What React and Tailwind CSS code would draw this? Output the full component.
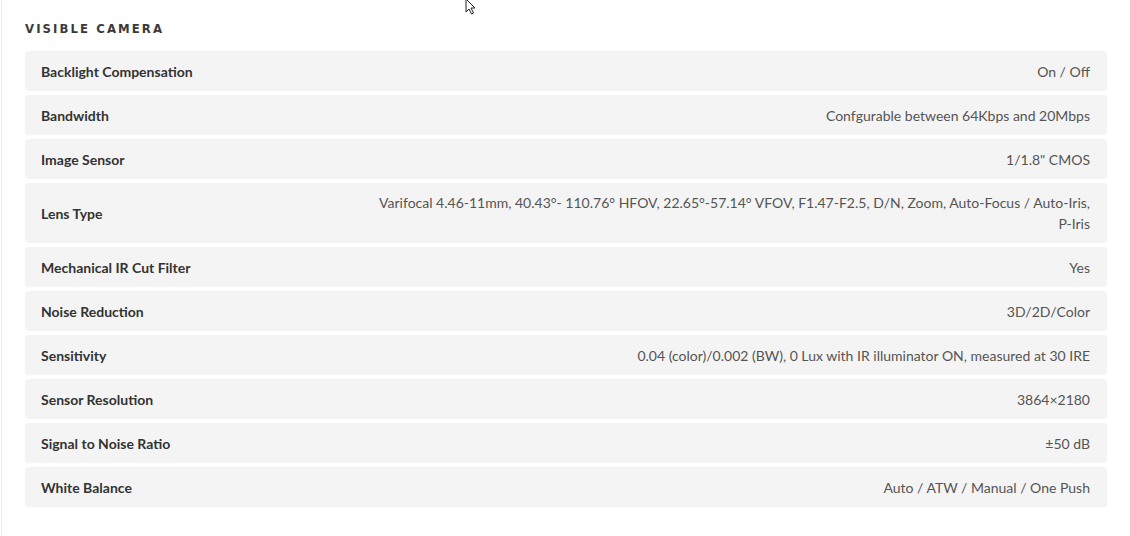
import React from 'react';

const SPECS = [
  ['Backlight Compensation', 'On / Off'],
  ['Bandwidth', 'Confgurable between 64Kbps and 20Mbps'],
  ['Image Sensor', '1/1.8" CMOS'],
  ['Lens Type', 'Varifocal 4.46-11mm, 40.43°- 110.76° HFOV, 22.65°-57.14° VFOV, F1.47-F2.5, D/N, Zoom, Auto-Focus / Auto-Iris, P\u2011Iris'],
  ['Mechanical IR Cut Filter', 'Yes'],
  ['Noise Reduction', '3D/2D/Color'],
  ['Sensitivity', '0.04 (color)/0.002 (BW), 0 Lux with IR illuminator ON, measured at 30 IRE'],
  ['Sensor Resolution', '3864×2180'],
  ['Signal to Noise Ratio', '±50 dB'],
  ['White Balance', 'Auto / ATW / Manual / One Push'],
];

function Cursor() {
  return (
    <svg className="absolute left-[465px] top-[-2px]" width="14" height="18" viewBox="0 0 14 18">
      <path d="M1 1 L1 14 L4 11 L6.5 16 L8.5 15 L6 10 L10 10 Z" fill="#fff" stroke="#222" strokeWidth="1" strokeLinejoin="round" />
    </svg>
  );
}

export default function App() {
  return (
    <div className="relative w-[1130px] h-[536px] bg-white overflow-hidden">
      <Cursor />
      <div className="ml-[1px] border-l border-[#ececec] h-full pl-[23px] pt-[21px] pr-[23px]">
        <h3
          className="text-[13px] font-bold uppercase tracking-[0.16em] text-[#3a3a3a] leading-[16px] mb-[14px]"
          style={{ fontFamily: '"DejaVu Sans Condensed", "DejaVu Sans", sans-serif' }}
        >
          Visible Camera
        </h3>
        <div className="flex flex-col gap-[4px]" style={{ fontFamily: 'Lato, "Open Sans", sans-serif' }}>
          {SPECS.map(([label, value]) => (
            <div
              key={label}
              className="flex items-center justify-between gap-8 bg-[#f4f4f4] rounded-[3px] min-h-[40px] pl-4 pr-[17px] py-[9px] text-[14px] leading-[21px]"
            >
              <span className="font-bold text-[#333] shrink-0">{label}</span>
              <span className="text-[#555] text-right max-w-[722px]">{value}</span>
            </div>
          ))}
        </div>
      </div>
    </div>
  );
}
